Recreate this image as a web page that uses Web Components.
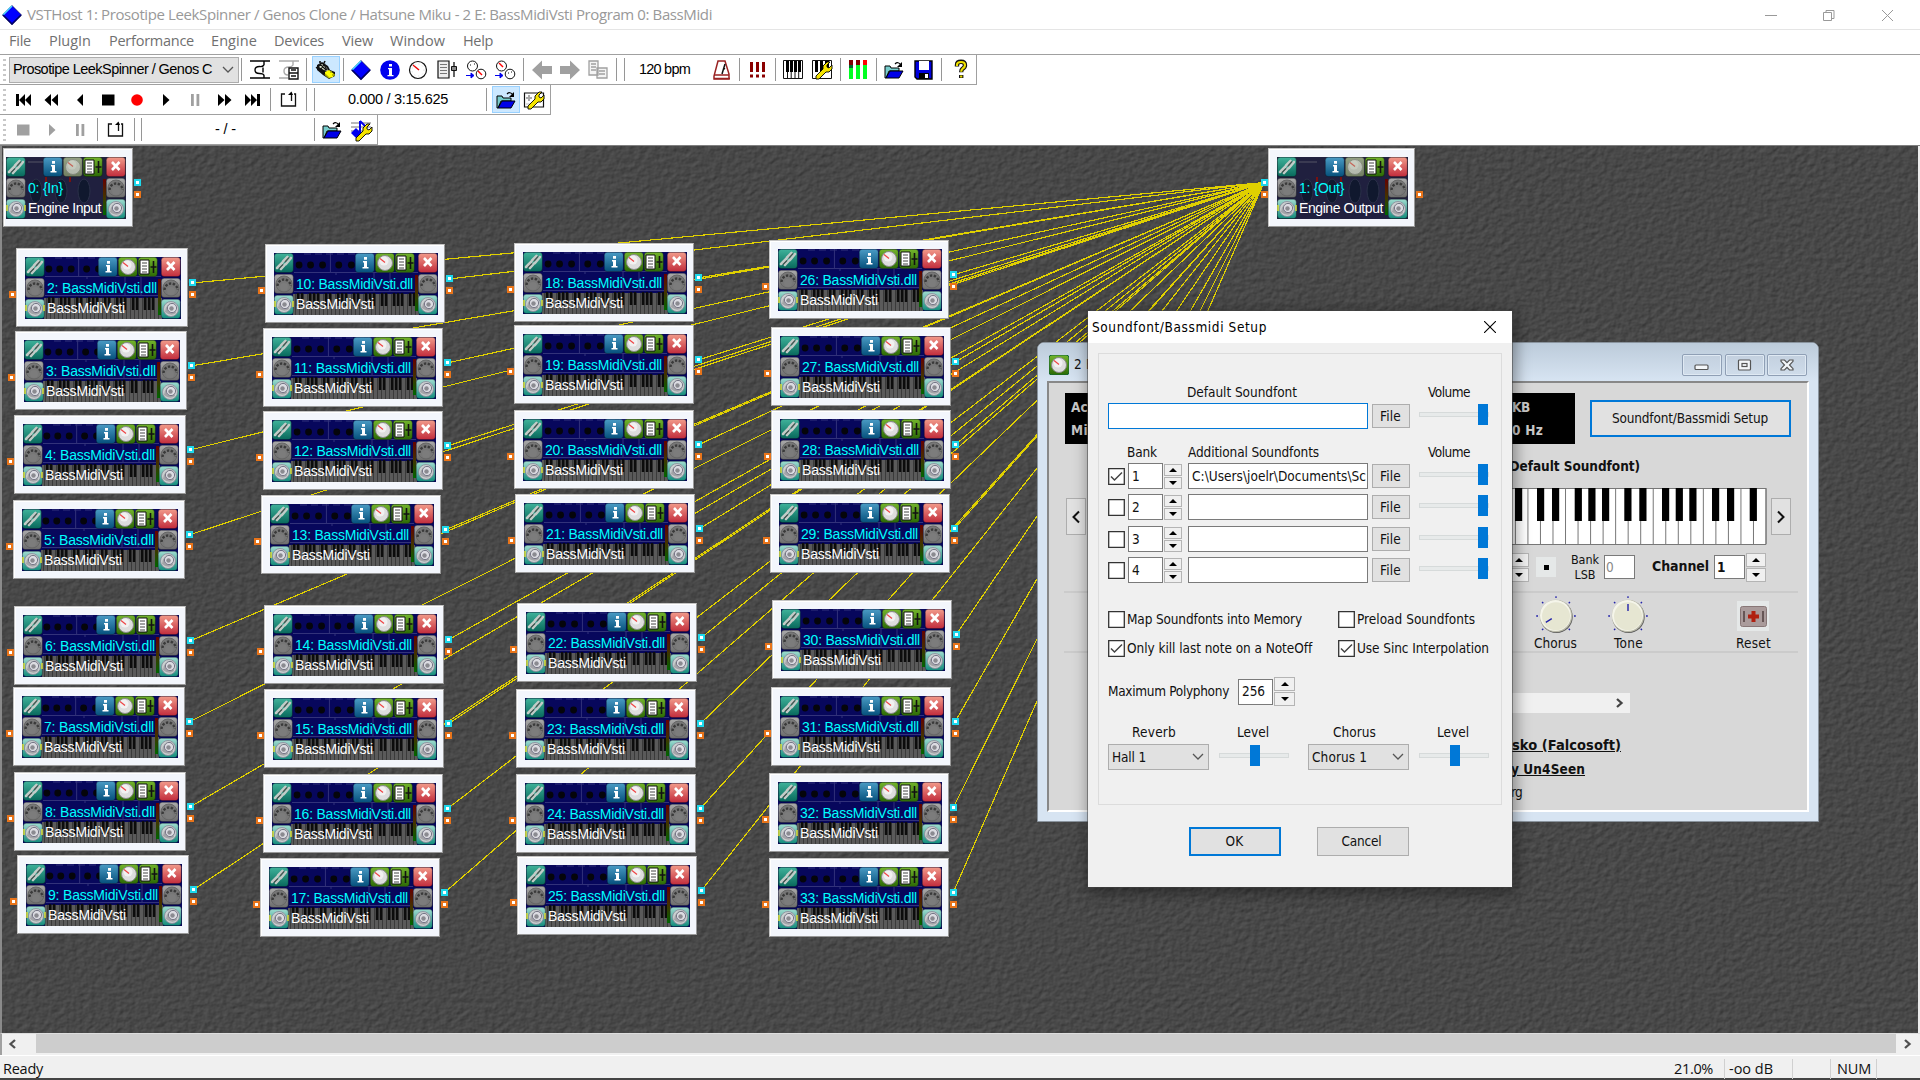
<!DOCTYPE html>
<html lang="en"><head><meta charset="utf-8"><title>VSTHost</title>
<style>html,body{margin:0;width:1920px;height:1080px;overflow:hidden;background:#fff}</style></head>
<body><vst-host></vst-host>
<script>
const UI='"DejaVu Sans Condensed","DejaVu Sans",sans-serif', SEG='"Open Sans","Noto Sans",sans-serif', MS='"Liberation Sans",Arial,sans-serif';
const cv=document.createElement('canvas').getContext('2d');
/* items: [x, width, html] laid along a flex row starting at x0 */
const flow=(x0,items,h)=>{let e=x0,s='';for(const[x,w,c]of items){s+=`<div style="flex:none;width:${w}px;margin-left:${x-e}px;display:flex;align-items:center;justify-content:flex-start">${c}</div>`;e=x+w}return `<div style="display:flex;align-items:center;height:${h}px">${s}</div>`};
/* rows: [y, height, html] stacked in a column starting at y0 */
const stack=(y0,rows)=>{let e=y0,s='<div style="display:flex;flex-direction:column">';for(const[y,h,c]of rows){s+=`<div style="flex:none;height:${h}px;margin-top:${y-e}px">${c}</div>`;e=y+h}return s+'</div>'};
const t=(x,w,str,st='')=>[x,w,`<fit-text w="${w}" style="${st}">${str}</fit-text>`];
const def=(n,f,css='')=>customElements.define(n,class extends HTMLElement{
 connectedCallback(){if(!this.shadowRoot){const r=this.attachShadow({mode:'open'});r.innerHTML=`<style>:host{display:block;box-sizing:border-box}*{box-sizing:border-box}${css}</style>`+f(this)}}});

customElements.define('fit-text',class extends HTMLElement{connectedCallback(){
 if(this.shadowRoot)return;const r=this.attachShadow({mode:'open'});r.innerHTML='<style>:host{display:block;white-space:pre;line-height:1.25}</style><slot></slot>';
 const c=getComputedStyle(this);cv.font=`${c.fontWeight} ${c.fontSize} ${c.fontFamily}`;const s=this.textContent;
 this.style.letterSpacing=((+this.getAttribute('w')-cv.measureText(s).width)/Math.max(1,s.length)).toFixed(3)+'px'}});

const FOLD='<path d="M1 6h5l1 2h8v3H5l-3 7H1z" fill="#7cc" stroke="#000"/><path d="M2 18l4-7h13l-4 7z" fill="#0000e8" stroke="#000"/><path d="M11 4q3-3 6 1" fill="none" stroke="#000" stroke-width="1.2"/><path d="M18 2v5h-5z"/>';
const WR='<path d="M18 2l-3 3 0 2 2 1 3-3v4l-3 3h-3l-7 7h-3v-3l7-7V6l4-4z" fill="#f5e400" stroke="#000" stroke-width=".9"/>';
const I={
dia:'<path d="M10 .5L19.5 10 10 19.5.5 10z" fill="#00f" stroke="#003" stroke-width=".6"/><path d="M10 1L1 10" stroke="#4bd5ff" stroke-width="1.6"/><path d="M19 10l-9 9-9-9" fill="none" stroke="#006" stroke-width="1.6"/>',
perf:'<path d="M0 1h20M0 18h20M14 1v4M14 5q-1.500 2-4.500 1.500Q5 6.500 5 10t4.500 3.500q4 0 4.500 2V18M13 7.500v5" stroke="#000" stroke-width="1.4" fill="none"/>',
perf2:'<path d="M0 1h20M0 18h9M14 1v4q-1 2-4 2-5 0-5 4t4 4" stroke="#aaa" stroke-width="1.4" fill="none"/><path d="M10 8h9v11h-9z" fill="#fff" stroke="#111" stroke-width="1.4"/><path d="M10 13h9M12 16h5M12 10h5" stroke="#111" stroke-width="1.6"/>',
gear:'<path d="M1 5l5-3 6 4 2 4 5 2v4l-6 3-6-4-6-5z" fill="#111"/><path d="M3 5l3-1 5 4 1 3-4-1-5-3z" fill="#e4ead0"/><path d="M4 4l6 6M7 3l4 7M2 8l3-5M9 3.500L5 9" stroke="#111" stroke-width="1.100"/><path d="M9 12l4-2 5 4-1 3-4 1-4-3z" fill="#ff0"/><path d="M9 14l4 4M15 11v2M19 15h-3" stroke="#aa0" stroke-width="1.400"/><path d="M4 1v2M9 1l-1 2M0 8l2-1" stroke="#111" stroke-width="1.600"/>',
info:'<circle cx="10" cy="10" r="9.8" fill="#00e"/><path d="M8 8h4v7h1.5v1.3h-6V15H9V9.300H8zM9 4h3v2.600H9z" fill="#fff"/>',
knob:'<circle cx="10" cy="10" r="8.5" fill="#fff" stroke="#111" stroke-width="1.2"/><path d="M5 5l6 5" stroke="#e00" stroke-width="1.5"/><circle cx="10" cy="10" r="6" fill="none" stroke="#ddd" stroke-dasharray="1 3"/>',
list:'<path d="M1 1h11v17H1z" fill="#eee" stroke="#111" stroke-width="1.200"/><path d="M3 4.500h7M3 7.500h7M3 10.500h7M3 13.500h7" stroke="#777" stroke-width="1.100"/><path d="M17 2v15" stroke="#111" stroke-width="1.300"/><path d="M14.500 6.500h5v4h-5z" fill="#888" stroke="#111"/>',
kk:'<circle cx="6.500" cy="6" r="5" fill="#fff" stroke="#111"/><circle cx="15" cy="14" r="4.800" fill="#fff" stroke="#111"/><path d="M4 5h1M8 4h1" stroke="#111"/><path d="M12 11l4 4" stroke="red" stroke-width="1.400"/><path d="M0 15.500h6M5 13v5l3-2.500z" stroke="#00e" fill="#00e"/>',
kk2:'<circle cx="6.500" cy="6" r="5" fill="#fff" stroke="#111"/><circle cx="15" cy="14" r="4.800" fill="#fff" stroke="#111"/><path d="M13 13h1M16 12h1" stroke="#111"/><path d="M4 3l4 4" stroke="red" stroke-width="1.400"/><path d="M0 15.500h6M5 13v5l3-2.500z" stroke="#00e" fill="#00e"/>',
left:'<path d="M0 10l10-9.500V6h10v8H10v5.500z" fill="#a0a0a0"/>',right:'<path d="M20 10L10 .5V6H0v8h10v5.500z" fill="#a0a0a0"/>',
doc:'<path d="M1 1h9v14H1zM9 8h10v10H9z" fill="#f4f4f4" stroke="#a0a0a0" stroke-width="1.300"/><path d="M3 4h5M3 7h5M3 10h5M11 11h6M11 14h6" stroke="#a0a0a0" stroke-width="1.300"/>',
metro:'<path d="M6 1h7l4 13v5H2v-3z" fill="#fff" stroke="#922" stroke-width="1.500"/><path d="M2 15h15M2 18.500h16" stroke="#922" stroke-width="1.500"/><path d="M10 14l3-10M11 8l2 1" stroke="#111" stroke-width="1.500"/>',
exc:'<path d="M3 2h3v10H3zM9 2h3v10H9zM15 2h3v10h-3zM3 14.500h3v3H3zM9 14.500h3v3H9zM15 14.500h3v3h-3z" fill="#8b0000"/>',
piano:'<path d="M.5.500h19v18H.5z" fill="#fff" stroke="#111"/><path d="M4.500 1v17M8.200 1v17M12 1v17M15.700 1v17" stroke="#111"/><path d="M3 1h3v11H3zM7 1h3v11H7zM11 1h3v11h-3zM15 1h3v11h-3z"/>',
meters:'<path d="M1 0h4v5H1zM8 0h4v5H8z" fill="#800000"/><path d="M15 0h4v5h-4z" fill="red"/><path d="M1 5h4v3H1z" fill="#063"/><path d="M1 8h4v11H1zM8 5h4v14H8zM15 5h4v14h-4z" fill="#0f2"/>',
open:FOLD,save:'<path d="M1 1h17v18H3l-2-2z" fill="#00d" stroke="#000" stroke-width="1.400"/><path d="M5 1h10v9H5z" fill="#fff"/><path d="M5 13h10v6H5z"/><path d="M11 14h3v4h-3z" fill="#fff"/>',
help:'<path d="M6 6.500V5q0-3.200 4-3.200t4 3.500q0 2-2.500 3.500-1.300 1-1.300 3.500M10.200 15v3" fill="none" stroke="#111" stroke-width="4.400"/><path d="M6 6V5q0-3 4-3t4 3.300q0 2-2.500 3.500-1.300 1-1.300 3M10.200 15.500v2" fill="none" stroke="#eee000" stroke-width="2.200"/>',
first:'<path d="M3 4h3v12H3zM12 4v12l-6-6zM18 4v12l-6-6z"/>',rew:'<path d="M10 4v12l-6.500-6zM17 4v12l-6.500-6z"/>',back:'<path d="M13 4v12l-6-6z"/>',stop:'<path d="M4 4.500h12.500v11H4z"/>',rec:'<circle cx="10" cy="10" r="5.800" fill="red"/>',play:'<path d="M7 4v12l6.500-6z"/>',pause:'<path d="M6 4h2.800v12H6zM11.500 4h2.800v12h-2.800z" fill="#a0a0a0"/>',ff:'<path d="M3 4v12l6.500-6zM10 4v12l6.500-6z"/>',last:'<path d="M2 4v12l6-6zM8 4v12l6-6zM14 4h3v12h-3z"/>',
stopg:'<path d="M4 4.500h12.500v11H4z" fill="#a0a0a0"/>',playg:'<path d="M7 4v12l6.500-6z" fill="#a0a0a0"/>',
loop:'<path d="M6 4H2.500v12h14V4H15M12.500 11V4.500" fill="none" stroke="#111" stroke-width="1.300"/><path d="M9 5l3.500-3.500L14 5z"/>',
pwr:'<path d="M.500 3h19v14H.500z" fill="#fff" stroke="#111" stroke-width="1.200"/><path d="M5 5v6M2 8h6" stroke="#aaa" stroke-width="2"/><path d="M2 14h6" stroke="#bbb"/>'+WR,
pianow:'<path d="M.5.500h19v18H.500z" fill="#fff" stroke="#111"/><path d="M3 1h3v11H3zM8 1h3v11H8zM13 1h4v11h-4zM7 12v6"/>'+WR,
notew:'<path d="M0 3h20M0 7h20M0 11h20" stroke="#777"/><path d="M9 1v12" stroke="#00e" stroke-width="2"/><path d="M0 13l5-5 5 5-5 5z" fill="#00e"/><path d="M9 1l5 5" stroke="#00e" stroke-width="2"/><g transform="translate(1 2)">'+WR+'</g>',
};
def('svg-icon',h=>`<svg width="20" height="20" viewBox="0 0 20 20">${I[h.getAttribute('n')]}</svg>`,':host{width:28px;height:27px;display:flex;align-items:center;justify-content:center}:host([on]){background:#cce8ff;border:1px solid #99d1ff}svg{overflow:visible}');
const sep='<div style="width:1px;height:23px;background:#969696"></div>';
const ic=(c,n,on='')=>[c-14.5,28,`<svg-icon n="${n}" ${on}></svg-icon>`], sp=c=>[c-1,1,sep];

def('tool-row',h=>{const w=+h.getAttribute('w');return `<div class="bar" style="width:${w}px"><div class="grip"></div><slot></slot></div>`},
 `:host{height:30px;background:#fff}.bar{height:30px;border-right:1px solid #a0a0a0;border-bottom:1px solid #a0a0a0;box-shadow:0 1px #ddd;display:flex;align-items:center}.grip{width:3px;height:22px;margin:0 3px;background:repeating-linear-gradient(#c8c8c8 0 2px,#fff 2px 5px)}:host([full]){border-bottom:0}`);

def('title-bar',()=>`<svg class="l" width="20" height="20" viewBox="0 0 20 20">${I.dia}</svg><fit-text w="685">VSTHost 1: Prosotipe LeekSpinner / Genos Clone / Hatsune Miku - 2 E: BassMidiVsti Program 0: BassMidi</fit-text><div class="r"><svg width="130" height="14" fill="none" stroke="#999"><path d="M0 7.500h12M58.500 4.500h8v8h-8zM61 4V2.500h8v8h-2M117 2l11 11M128 2l-11 11"/></svg></div>`,
 `:host{height:30px;display:flex;align-items:center;background:#fff;border-bottom:1px solid #e5e5e5;font:15px ${SEG};color:#999}.l{margin:0 5px 0 2px}.r{margin-left:auto;margin-right:25px;height:17px}`);
def('menu-bar',()=>flow(0,[['File',9,22],['PlugIn',49,42],['Performance',109,85],['Engine',211,46],['Devices',274,50],['View',342,31],['Window',390,55],['Help',463,30]].map(a=>t(a[1],a[2],a[0])),23),
 `:host{height:25px;background:#fff;border-bottom:1px solid #a0a0a0;font:14.500px ${SEG};color:#707070}`);

const chip=(x,y,g,inner)=>`<g transform="translate(${x} ${y})"><rect x=".3" y=".3" width="19" height="19.300" rx="3" fill="url(#${g})" stroke="#0007" stroke-width=".6"/>${inner}</g>`;
const GR='<defs>'+[['te','#3fb29a','#08695c'],['gy','#aaa','#6c6c6c'],['bl','#4a9bc4','#05507c'],['gn','#73b42c','#2c6a05'],['fg','#94a284','#727f62'],['rd','#f29a8a','#c22c3c'],['sp','#9fdcd0','#128b7b']].map(a=>`<linearGradient id="${a[0]}" x1="0" y1="0" x2="0" y2="1"><stop offset="0" stop-color="${a[1]}"/><stop offset="1" stop-color="${a[2]}"/></linearGradient>`).join('')+'<linearGradient id="m" x1="0" y1="0" x2="0" y2="1"><stop offset="0" stop-color="#600"/><stop offset=".5" stop-color="#430"/><stop offset="1" stop-color="#060"/></linearGradient></defs>';
const knobI=(o=1)=>`<g opacity="${o}"><circle cx="10" cy="10" r="7.500" fill="#ddd" stroke="#888"/><circle cx="9" cy="8" r="4.500" fill="#f1f1f1"/><path d="M5 5.500l5 4" stroke="#e44" stroke-width="1.200"/></g>`;
const SPK='<circle cx="10" cy="10" r="7.500" fill="#c9d0d0" stroke="#889" stroke-width=".8"/><path d="M4 13q0-8 9-9l2 10q-5 4-11-1" fill="#a4a4a8"/><circle cx="11" cy="9" r="4.600" fill="#dcdce2" stroke="#778"/><circle cx="10.500" cy="9.500" r="2.200" fill="#8a8a90"/>';
const DIN='<circle cx="10" cy="10" r="8" fill="#777" stroke="#666"/><path d="M3.500 12a6.500 6.500 0 0 1 13 0" stroke="#3a3a3a" stroke-width="2.400" stroke-dasharray="2.400 1.500" fill="none"/><circle cx="10" cy="13" r="4" fill="#7c7c7c"/>';
def('plug-node',h=>{const W=+h.dataset.w,eng=h.hasAttribute('eng'),n=h.dataset.n,K=W-20,S=W/157;
 let bg=eng?`<rect width="${W}" height="62" fill="#20203f"/>${[30,55,78,96,113].filter(x=>x<W-24).map(x=>`<ellipse cx="${x}" cy="34" rx="6" ry="12" fill="#10182e" stroke="#2a3048"/>`).join('')}<path d="M22 5h18" stroke="#556"/><path d="M40 20v5M64 20v5" stroke="#711" stroke-width="2"/>`
 :`<rect width="${W}" height="62" fill="#07075c"/><path d="M20 19.500H${K}M20 38.500H${K}M${54*S} 0v20" stroke="#32327a"/>${[24,35,46.500,62,74].map(x=>`<circle cx="${x*S}" cy="12" r="3.400" fill="#05050a"/>`).join('')}<path d="M30 1h${W-60}" stroke="#33337c" stroke-dasharray="7 4"/><path d="M62 19v3M100 20v18M116 20v18" stroke="#33337c"/><rect x="19" y="41" width="${K-18}" height="21" fill="#5a5a5a"/>${Array.from({length:Math.floor((K-20)/4)},(_,i)=>`<path d="M${21.500+i*4} 41v21" stroke="#3a3a3a"/>`+([0,3].includes(i%7)?'':`<path d="M${20+i*4} 40v13" stroke="#0c0c0c" stroke-width="2.500"/>`)).join('')}`;
 bg+=`<rect x="${K-3}" y="22" width="3" height="36" fill="url(#m)"/>`;
 const svg=`<svg class="b" width="${W}" height="62">${GR}${bg}`+
 chip(0,0,'te','<g fill="none" stroke="#c2ccc8" stroke-width="2.600" stroke-linecap="round"><path d="M3 15L8.500 9.500M7 16l4.500-5M9 8.500L13.500 4M12 11l5-6"/></g><path d="M5 15.500l4-4M11 9l4-4.500" stroke="#4a5552" stroke-width="1.200"/>')+
 chip(0,21,'gy',DIN)+chip(0,42,'sp',SPK)+
 chip(W-83,0,'bl','<path d="M8 8h4v6h1.500v1.500h-6V14H9V9.500H8zM9 4h3v2.700H9z" fill="#fff"/>')+
 chip(W-63,0,eng?'fg':'gn',knobI(eng?.6:1))+
 chip(W-43,0,'gn','<path d="M2 3h9v14H2z" fill="#fff" stroke="#111"/><path d="M4 6h5M4 9h5M4 12h5M4 15h5" stroke="#444"/><path d="M15.500 4v12M12.500 10h6" stroke="#111" stroke-width="1.600"/>')+
 chip(W-20,0,'rd','<path d="M6 5l7.500 8M13.500 5L6 13" stroke="#fff" stroke-width="2.600"/>')+
 chip(W-20,21,'gy',DIN)+chip(W-20,42,'sp',SPK)+`<path d="M1 48v6M19 48v6" stroke="#dd3" stroke-width="1.500"/></svg>`;
 const pad=+(h.dataset.pad||9);
 const port=(x,y,c)=>`<i style="left:${x}px;top:${y}px;border-color:${c}"></i>`;
 const OW=+h.dataset.ow, p=(h.dataset.ports||'lo rc ro').split(' ');
 return `<div class="box" style="width:${OW}px;padding-left:${pad-1}px"><div class="in" style="width:${W}px">${svg}<div class="tx"><fit-text w="${h.dataset.t1}" class="a">${n}</fit-text><fit-text w="${h.dataset.t2}">${h.dataset.s}</fit-text></div></div></div>`+
 (p.includes('lo')?port(-7,43,'#e8741a'):'')+(p.includes('lc')?port(-7,31,'#1cd8ec'):'')+(p.includes('rc')?port(OW+1,31,'#1cd8ec'):'')+(p.includes('ro')?port(OW+1,43,'#e8741a'):'')},
 `:host{position:absolute;font:14px ${MS}}.box{height:79px;padding-top:8px;background:#f3f6fc;border:1px solid #c4c4c4;border-right-color:#999;border-bottom-color:#999;box-shadow:inset 1px 1px #fff}.in{height:62px;display:grid}.b,.tx{grid-area:1/1}.b{display:block}.tx{padding:23px 0 0 22px;color:#fff;display:flex;flex-direction:column;gap:2px;z-index:1}.a{color:#0ff}i{position:absolute;width:7px;height:7px;background:#fff;border:2px solid;box-sizing:border-box}`);

const N=[[16,248],[15,331],[14,415],[13,500],[14,606],[13,687],[14,772],[17,855],
[265,244],[263,328],[263,411],[261,495],[264,605],[264,689],[263,774],[260,858],
[514,243],[514,325],[514,410],[515,494],[517,603],[516,689],[516,774],[517,856],
[769,240],[771,327],[771,410],[770,494],[772,600],[771,687],[769,773],[769,858]];
def('node-canvas',()=>{
 let l='',s='';N.forEach(([x,y],i)=>{const n=i+2,ow=n<10?172:180;l+=`M${x+ow+4} ${y-146+35}L1264 36.500`;
 s+=`<plug-node data-w="${ow-16}" data-ow="${ow}" data-n="${n}: BassMidiVsti.dll" data-s="BassMidiVsti" data-t1="${n<10?110:117}" data-t2="78" style="left:${x}px;top:${y-146}px"></plug-node>`});
 return `<svg class="bg" width="1920" height="887"><defs><filter id="tex" x="0" y="0" width="100%" height="100%" color-interpolation-filters="sRGB"><feTurbulence type="fractalNoise" baseFrequency=".16 .2" numOctaves="3" seed="7"/><feDiffuseLighting surfaceScale=".55" diffuseConstant="1" lighting-color="#666"><feDistantLight azimuth="225" elevation="45"/></feDiffuseLighting></filter></defs><rect width="1920" height="887" fill="#444"/><rect width="1920" height="887" filter="url(#tex)"/><path d="${l}" stroke="#e0d000" stroke-width="1.150" fill="none" shape-rendering="crispEdges"/></svg>
 <plug-node eng data-w="120" data-ow="130" data-pad="3" data-n="0: {In}" data-s="Engine Input" data-t1="35" data-t2="73" data-ports="rc ro" style="left:3px;top:2px"></plug-node>
 <plug-node eng data-w="131" data-ow="147" data-n="1: {Out}" data-s="Engine Output" data-t1="45" data-t2="84" data-ports="lc lo ro" style="left:1268px;top:2px"></plug-node>${s}
 <plugin-window style="left:1037px;top:196px"></plugin-window><setup-dialog style="left:1088px;top:165px"></setup-dialog>`},
 `:host{position:relative;height:887px;overflow:hidden;border-left:2px solid #8a8a8a;border-right:2px solid #eee;background:#444}.bg{display:block;margin-left:-2px}plug-node,plugin-window,setup-dialog{margin-left:-2px}`);

def('x-btn',()=>'<slot></slot>',`:host{display:flex;align-items:center;justify-content:center;width:100%;background:#e1e1e1;border:1px solid #adadad;color:#111;padding-right:1px}:host([hot]){border:2px solid #0078d7}`);
def('x-field',()=>'<slot></slot>',`:host{display:flex;align-items:center;width:100%;background:#fff;border:1px solid #7a7a7a;padding-left:3px;overflow:hidden;height:26px}:host([hot]){border-color:#0078d7}`);
def('x-check',h=>`<svg width="17" height="17"><path d="M.7.700h15.600v15.600H.7z" fill="#fff" stroke="#333" stroke-width="1.300"/>${h.hasAttribute('on')?'<path d="M3 8.500l3.500 3.500L14 4.500" fill="none" stroke="#444" stroke-width="1.500"/>':''}</svg>`,':host{height:17px}svg{display:block}');
def('x-spin',h=>{const s=d=>`<div><svg width="8" height="4"><path d="${d}"/></svg></div>`;return s('M0 4L4 0l4 4z')+s('M0 0h8L4 4z')},
 ':host{display:flex;flex-direction:column;gap:1px;width:100%}div{flex:1;border:1px solid #b4b4b4;background:#f0f0f0;display:flex;align-items:center;justify-content:center}svg{display:block}');
def('x-slider',h=>{const v=+h.getAttribute('at');return `<div class="t"><div class="h" style="margin-left:${v}px"></div></div>`},
 ':host{width:70px;height:21px;display:flex;align-items:center;margin-bottom:4px}.t{width:70px;height:5px;border:1px solid #d6dada;background:#e7eaea;display:flex;align-items:center}.h{flex:none;width:10px;height:21px;background:#0078d7}');
def('x-select',()=>'<slot></slot><svg width="12" height="8" fill="none" stroke="#555" stroke-width="1.300"><path d="M1 1l5 5 5-5"/></svg>',
 ':host{display:flex;align-items:center;width:100%;height:26px;background:#e1e1e1;border:1px solid #adadad;padding-left:3px}svg{margin-left:auto;margin-right:4px}');

def('setup-dialog',()=>{
 const X=1099,file=[1372,38,'<x-btn style="height:24px"><fit-text w="21">File</fit-text></x-btn>'],sl=(x,a)=>[x,70,`<x-slider at="${a}"></x-slider>`];
 const bank=i=>flow(X,[[1108,17,`<x-check ${i==1?'on':''}></x-check>`],[1128,35,`<x-field>${i}</x-field>`],[1164,18,'<x-spin style="height:25px"></x-spin>'],[1188,180,`<x-field>${i==1?'<fit-text w="174" style="flex:none">C:\\Users\\joelr\\Documents\\Sc</fit-text>':''}</x-field>`],file,sl(1419,58)],26);
 return `<div class="tt">${flow(1088,[t(1092,175,'Soundfont/Bassmidi Setup',`font:15.500px ${SEG}`),[1484,12,'<svg width="12" height="12" stroke="#000" stroke-width="1.100"><path d="M0 0l12 12M12 0L0 12"/></svg>']],32)}</div><div class="g">`+
 stack(354,[[383,18,flow(X,[t(1187,110,'Default Soundfont'),t(1428,42,'Volume')],18)],
 [403,26,flow(X,[[1108,260,'<x-field hot></x-field>'],file,sl(1419,58)],26)],
 [443,18,flow(X,[t(1127,30,'Bank'),t(1188,131,'Additional Soundfonts'),t(1428,42,'Volume')],18)],
 [463,26,bank(1)],[494,26,bank(2)],[526,26,bank(3)],[557,26,bank(4)],
 [610,18,flow(X,[[1108,17,'<x-check></x-check>'],t(1127,175,'Map Soundfonts into Memory'),[1338,17,'<x-check></x-check>'],t(1357,118,'Preload Soundfonts')],18)],
 [639,18,flow(X,[[1108,17,'<x-check on></x-check>'],t(1127,185,'Only kill last note on a NoteOff'),[1338,17,'<x-check on></x-check>'],t(1357,132,'Use Sinc Interpolation')],18)],
 [677,29,flow(X,[t(1108,121,'Maximum Polyphony'),[1238,35,'<x-field><fit-text w="23">256</fit-text></x-field>'],[1274,21,'<x-spin style="height:29px"></x-spin>']],29)],
 [723,18,flow(X,[t(1132,44,'Reverb'),t(1237,32,'Level'),t(1333,43,'Chorus'),t(1437,32,'Level')],18)],
 [744,26,flow(X,[[1108,101,'<x-select><fit-text w="34">Hall 1</fit-text></x-select>'],sl(1219,30),[1308,101,'<x-select><fit-text w="55">Chorus 1</fit-text></x-select>'],sl(1419,30)],26)]])+
 '</div>'+flow(1088,[[1189,92,'<x-btn hot style="height:29px"><fit-text w="18">OK</fit-text></x-btn>'],[1317,92,'<x-btn style="height:29px;padding-right:3px"><fit-text w="40">Cancel</fit-text></x-btn>']],29)},
 `:host{position:absolute;width:424px;height:576px;background:#f0f0f0;font:13.500px ${UI};color:#111;box-shadow:0 0 0 1px #4448,2px 4px 14px 2px #0006}.tt{height:32px;background:#fff;color:#000;margin-bottom:10px}.g{margin:0 10px 22px 10px;height:452px;border:1px solid #dcdcdc;}`);

def('x-dial',h=>{const a=+h.getAttribute('a');let k='';for(let i=-3;i<=3;i++){const r=i*45*Math.PI/180;k+=`<path d="M${20+18*Math.sin(r)} ${20-18*Math.cos(r)}L${20+19.800*Math.sin(r)} ${20-19.800*Math.cos(r)}" stroke="#22a" stroke-width="1.300"/>`}
 return `<svg width="40" height="40">${k}<circle cx="20.500" cy="20.800" r="16.200" fill="#555"/><circle cx="20" cy="20" r="16.200" fill="#b8b8a8"/><circle cx="19.500" cy="19.500" r="15.500" fill="#f5f5ea"/><circle cx="20" cy="20.300" r="14" fill="#e6e6d2"/><path d="M20 15V8" stroke="#22a" stroke-width="1.400" transform="rotate(${a} 20 20)"/></svg>`},'svg{display:block;overflow:visible}');
def('plugin-window',()=>{
 let keys='';for(let x=1766;x>1500;x-=12.530)keys+=`<path d="M${x-1500} 0v56" stroke="#777"/>`;
 [75,141,186,254,295,336,403,448,516,557,598,666,711,779].forEach(v=>keys+=`<rect x="${(v/3-10).toFixed(1)}" y="0" width="7.200" height="33"/>`);
 const sb=(d)=>`<div class="cb"><svg width="16" height="12" fill="#f4f7fa" stroke="#555" stroke-width="1.200">${d}</svg></div>`;
 const pb=(s)=>`<x-btn style="height:37px"><svg width="10" height="14" fill="none" stroke="#111" stroke-width="2"><path d="${s}"/></svg></x-btn>`;
 const hr='<div style="margin:0 9px 0 15px;height:2px;background:#cbcbcb"></div>',X=1049;
 const b='font-weight:bold;';
 return `<div class="tb">${flow(1038,[[1049,20,`<svg width="20" height="20">${GR}<rect width="20" height="20" rx="3" fill="url(#gn)" stroke="#163"/>${knobI()}</svg>`],t(1074,20,'2 E',`font:15px ${SEG};color:#9aa4ae;margin-top:4px`),[1682,40,sb('<rect x="1" y="6" width="13" height="4.500" rx="1"/>')],[1725,40,sb('<rect x="1.500" y="1" width="12" height="10" rx="1"/><rect x="5" y="4.500" width="5" height="3"/>')],[1767,40,sb('<path d="M2 1h3.500L8 3.700 10.500 1H14v1.300L10.500 6 14 9.700V11h-3.500L8 8.300 5.500 11H2V9.700L5.500 6 2 2.300z"/>')]],43)}</div><div class="c">`+
 stack(383,[[393,51,flow(X,[[1065,510,`<div class="bk">${stack(393,[[397,20,flow(1065,[t(1071,17,'Ac'),t(1512,18,'KB')],20)],[420,20,flow(1065,[t(1071,17,'Mi'),t(1512,31,'0 Hz')],20)]])}</div>`],[1590,201,'<x-btn hot style="height:37px"><fit-text w="156">Soundfont/Bassmidi Setup</fit-text></x-btn>']],51)],
 [457,19,flow(X,[t(1504,136,'(Default Soundfont)',b)],19)],
 [488,57,flow(X,[[1066,20,pb('M8 1.500L2.500 7 8 12.500')],[1500,267,`<svg width="267" height="57"><path d="M0 .500h266v56H0" fill="#fff" stroke="#777"/>${keys}</svg>`],[1771,20,pb('M2 1.500L7.500 7 2 12.500')]],57)],
 [552,30,flow(X,[[1508,21,'<x-spin style="height:29px"></x-spin>'],[1536,20,'<div class="sq"><b></b></div>'],[1570,30,'<div style="font-size:12.500px;line-height:15px;text-align:center;width:30px">Bank<br>LSB</div>'],[1604,31,'<x-field style="height:24px;padding-left:1px;color:#888">0</x-field>'],t(1652,57,'Channel',b+'font-size:14px'),[1714,31,'<x-field style="height:24px;font-weight:bold;padding-left:2px">1</x-field>'],[1746,20,'<x-spin style="height:29px"></x-spin>']],30)],
 [591,2,hr],
 [596,40,flow(X,[[1536,40,'<x-dial a="-122"></x-dial>'],[1608,40,'<x-dial a="0"></x-dial>'],[1737,32,'<div class="rs"><svg width="27" height="21"><rect x=".5" y=".500" width="26" height="20" rx="2" fill="#aa9b9b" stroke="#877"/><path d="M4 5v11M23 5v11" stroke="#655" stroke-width="2"/><path d="M13.500 5v11M8 10.500h11" stroke="#b02010" stroke-width="4"/></svg></div>']],40)],
 [636,14,flow(X,[t(1534,43,'Chorus'),t(1614,29,'Tone'),t(1736,35,'Reset')],14)],
 [651,2,hr],
 [692,21,flow(X,[[1500,130,'<div class="hs"><svg width="8" height="10" fill="none" stroke="#444" stroke-width="2.300"><path d="M1 1l4.500 4L1 9"/></svg></div>']],21)],
 [735,20,flow(X,[t(1512,109,'sko (Falcosoft)',b+'font-size:14.500px;text-decoration:underline')],20)],
 [759,20,flow(X,[t(1511,74,'y Un4Seen',b+'text-decoration:underline')],20)],
 [782,20,flow(X,[t(1511,11,'rg')],20)]])+'</div>'},
 `:host{position:absolute;width:782px;height:480px;background:#d7e4f2;border:1px solid #8a949e;border-radius:7px 7px 0 0;font:13.500px ${UI};color:#111}.tb{height:38px;background:linear-gradient(#bccbda,#d7e4f2);border-radius:6px 6px 0 0}.c{margin:0 9px;height:431px;background:#d8d8d8;border:2px solid #fff;border-top-color:#888;border-left-color:#888}.cb{width:40px;height:22px;border:1px solid #8f9fb5;border-radius:2px;box-shadow:inset 0 0 0 1px #dfe9f3;background:linear-gradient(#c3d0df,#cfdcea);display:flex;align-items:center;justify-content:center}.bk{width:510px;height:51px;background:#000;color:#c8c8c8;font-weight:bold}.sq{width:20px;height:20px;background:#e5e8e8;display:flex;align-items:center;justify-content:center}.sq b{width:5px;height:5px;background:#000}.rs{width:32px;height:30px;background:#e5e8e8;display:flex;align-items:center;justify-content:center}.hs{width:130px;height:20px;background:#f0f0f0;display:flex;align-items:center;justify-content:flex-end;padding-right:6px}`);

def('scroll-bar',()=>'<div class="a"><svg width="9" height="10"><path d="M7 1L2.500 5 7 9"/></svg></div><div class="t"></div><div class="z"><svg width="9" height="10"><path d="M2 1l4.500 4L2 9"/></svg></div>',
 ':host{height:22px;display:flex;background:#f0f0f0;border-top:1px solid #ddd;border-left:2px solid #a0a0a0;padding-bottom:2px}.a,.z{width:34px;display:flex;align-items:center;padding-left:6px}.z{width:24px;padding-left:7px}.t{flex:1;background:#cdcdcd}svg{fill:none;stroke:#505050;stroke-width:2.300}');
def('status-bar',()=>{const s='<div style="width:1px;height:20px;background:#d0d0d0"></div>';return flow(0,[t(3,40,'Ready'),t(1674,39,'21.0%'),[1724,1,s],t(1729,44,'-oo dB'),[1792,1,s],[1830,1,s],t(1837,34,'NUM'),[1876,1,s]],20)},
 `:host{height:25px;padding-top:3px;background:#f0f0f0;border-top:1px solid #fff;border-bottom:2px solid #444;font:14.500px ${SEG};color:#111}`);

def('vst-host',()=>`<title-bar></title-bar><menu-bar></menu-bar>
<tool-row w="977">${flow(9,[[9,230,`<x-select style="color:#000"><fit-text w="199">Prosotipe LeekSpinner / Genos C</fit-text></x-select>`],sp(242),[246,28,'<svg-icon n="perf"></svg-icon>'],ic(289,'perf2'),sp(307),ic(326,'gear','on'),sp(343.5),ic(361,'dia'),ic(390,'info'),ic(418.5,'knob'),ic(447.5,'list'),ic(476,'kk'),ic(505,'kk2'),sp(523.5),ic(542,'left'),ic(570,'right'),ic(598.5,'doc'),sp(617),sp(625),t(639,51,'120 bpm'),ic(722,'metro'),sp(739.5),ic(757,'exc'),sp(776),ic(793.5,'piano'),ic(822.5,'pianow'),sp(841),ic(858,'meters'),sp(877),ic(894.5,'open'),ic(924,'save'),sp(942),ic(961,'help')],29)}</tool-row>
<tool-row w="551">${flow(9,[ic(23,'first'),ic(51,'rew'),ic(80,'back'),ic(108.5,'stop'),ic(137,'rec'),ic(166,'play'),ic(195,'pause'),ic(225,'ff'),ic(253,'last'),sp(271),ic(289,'loop'),sp(307),sp(315),t(348,100,'0.000 / 3:15.625'),sp(487),ic(506,'open','on'),ic(534.5,'pwr')],29)}</tool-row>
<tool-row w="378">${flow(9,[ic(23,'stopg'),ic(52,'playg'),ic(80,'pause'),sp(98),ic(116.5,'loop'),sp(135),sp(142),t(215,21,'- / -'),sp(315),ic(332,'open'),ic(361.5,'notew')],29)}</tool-row>
<div style="height:1px;background:#808080"></div><node-canvas></node-canvas><scroll-bar></scroll-bar><status-bar></status-bar>`,
`:host{display:flex;flex-direction:column;width:1920px;height:1080px;background:#fff;font:14.500px ${MS};color:#000}:host>*{flex:none}title-bar,menu-bar,tool-row,node-canvas,scroll-bar,status-bar{flex:none}`);
</script></body></html>
